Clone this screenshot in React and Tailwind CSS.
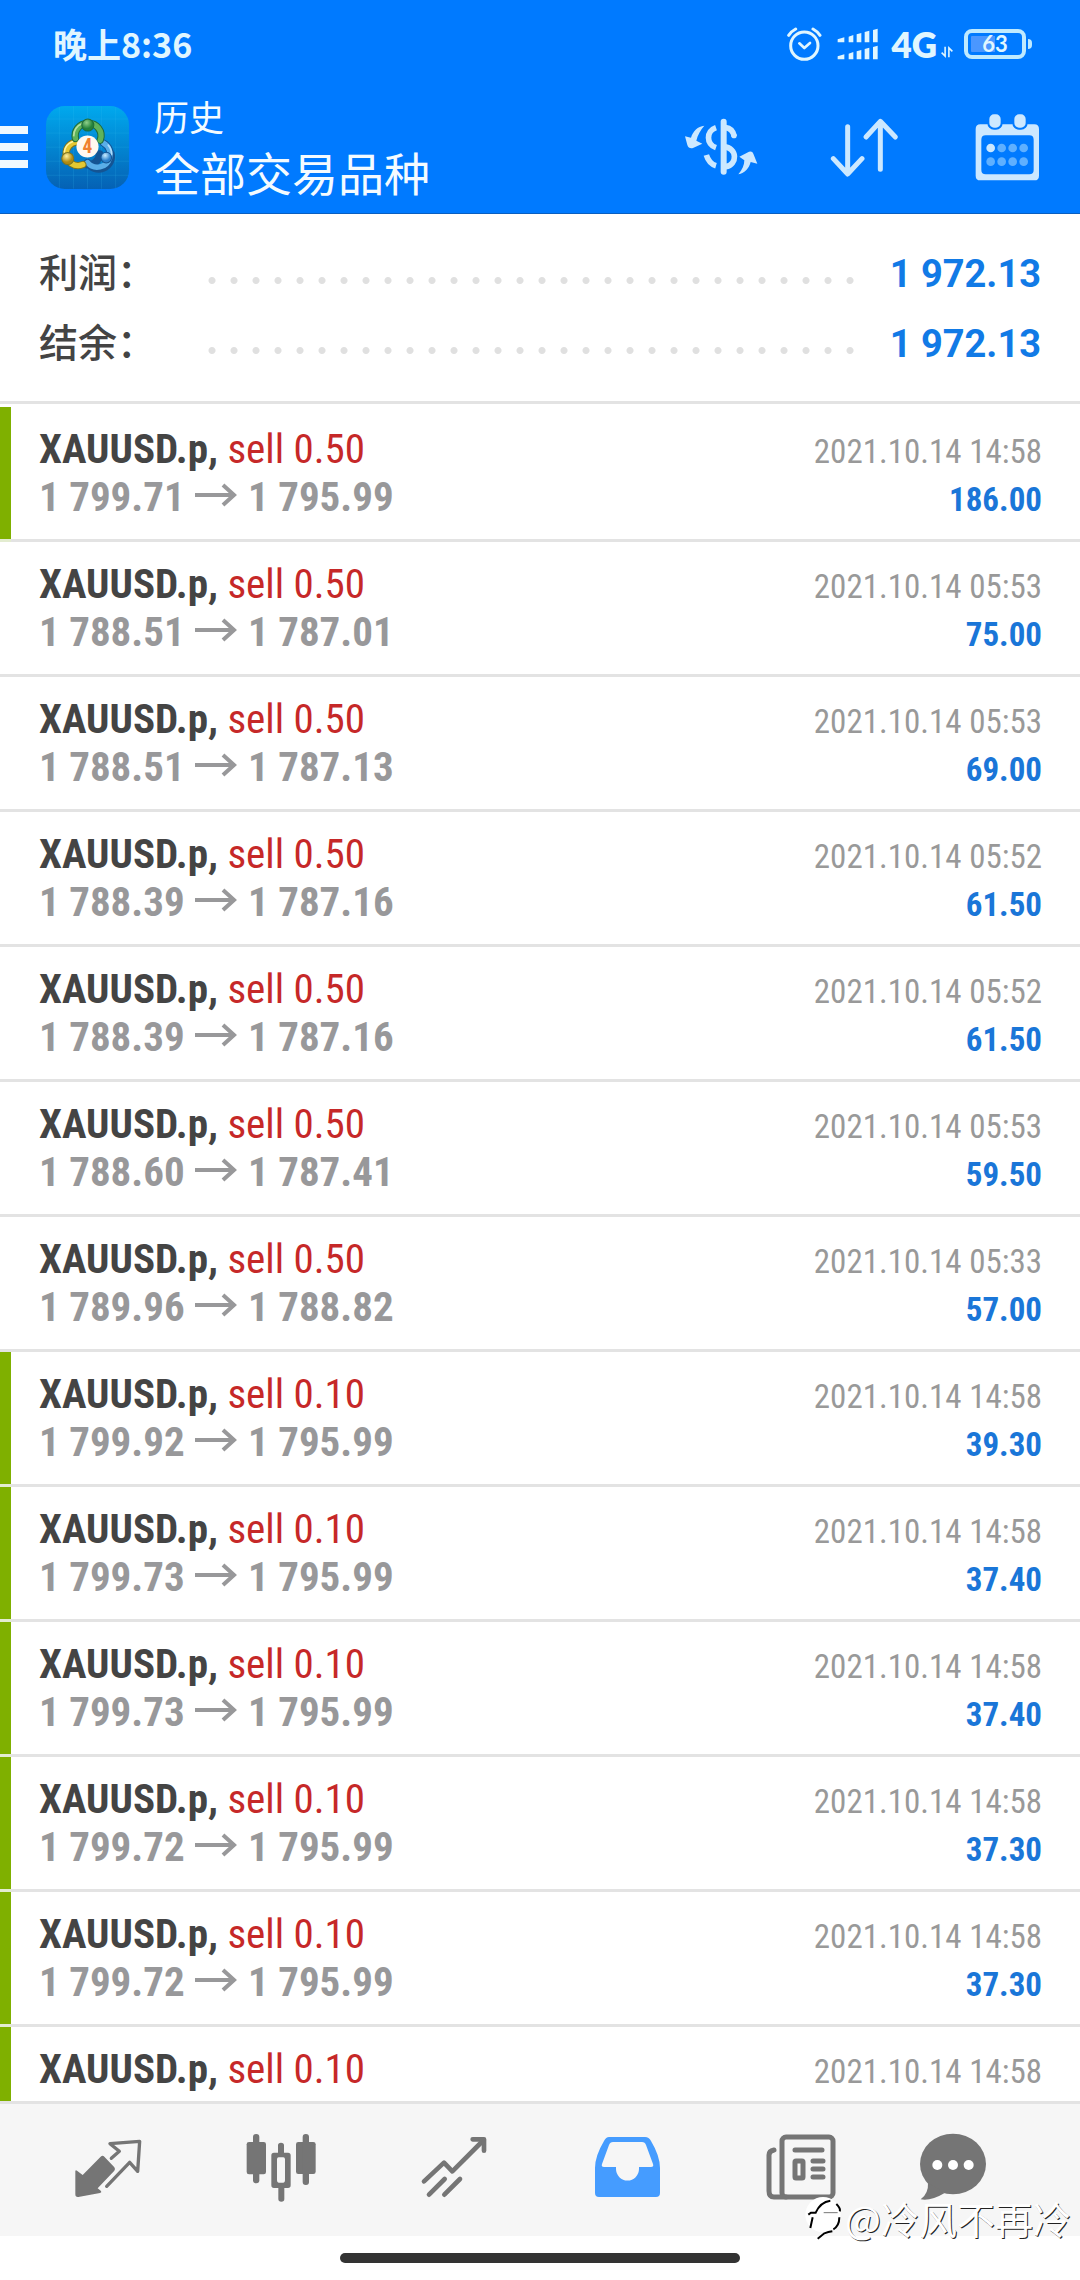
import React from 'react';

const deals = [
  { volume: '0.50', open: '1 799.71', close: '1 795.99', time: '2021.10.14 14:58', profit: '186.00', marked: true },
  { volume: '0.50', open: '1 788.51', close: '1 787.01', time: '2021.10.14 05:53', profit: '75.00' },
  { volume: '0.50', open: '1 788.51', close: '1 787.13', time: '2021.10.14 05:53', profit: '69.00' },
  { volume: '0.50', open: '1 788.39', close: '1 787.16', time: '2021.10.14 05:52', profit: '61.50' },
  { volume: '0.50', open: '1 788.39', close: '1 787.16', time: '2021.10.14 05:52', profit: '61.50' },
  { volume: '0.50', open: '1 788.60', close: '1 787.41', time: '2021.10.14 05:53', profit: '59.50' },
  { volume: '0.50', open: '1 789.96', close: '1 788.82', time: '2021.10.14 05:33', profit: '57.00' },
  { volume: '0.10', open: '1 799.92', close: '1 795.99', time: '2021.10.14 14:58', profit: '39.30', marked: true },
  { volume: '0.10', open: '1 799.73', close: '1 795.99', time: '2021.10.14 14:58', profit: '37.40', marked: true },
  { volume: '0.10', open: '1 799.73', close: '1 795.99', time: '2021.10.14 14:58', profit: '37.40', marked: true },
  { volume: '0.10', open: '1 799.72', close: '1 795.99', time: '2021.10.14 14:58', profit: '37.30', marked: true },
  { volume: '0.10', open: '1 799.72', close: '1 795.99', time: '2021.10.14 14:58', profit: '37.30', marked: true },
  { volume: '0.10', open: '1 799.70', close: '1 795.99', time: '2021.10.14 14:58', profit: '37.10', marked: true },
];

const StatusBar = () => (
  <div className="flex h-[88px] items-center justify-between pl-[53px] pr-12 text-[#e0f6ff]">
    <span className="text-[34px] font-bold leading-none">晚上8:36</span>
    <div className="flex items-center">
      <svg className="h-9 w-9" viewBox="350 18 108 108" fill="none" stroke="currentColor" strokeLinecap="round" strokeLinejoin="round">
        <circle cx="405" cy="77" r="41" strokeWidth="9" />
        <path d="M390 70l15 14 17-15" strokeWidth="8" />
        <path d="M358 46q8-12 21-19M431 27q13 7 21 19" strokeWidth="9" />
      </svg>
      <svg className="ml-[15px] h-8 w-[42px]" viewBox="502 26 126 96" fill="currentColor">
        {[0, 51].map((dy) => (
          <g key={dy} transform={`translate(0 ${dy})`}>
            <path d="M504 60l20-6v15h-20zM537 52l14-5v22h-14zM561 45l14-4v28h-14zM585 38l14-4v35h-14zM610 32l14-4v41h-14z" />
          </g>
        ))}
      </svg>
      <span className="ml-3 font-['Lato',sans-serif] text-[35px] font-extrabold leading-none">4G</span>
      <svg className="ml-1 mt-4 h-3 w-3" viewBox="811 75 38 36" fill="none" stroke="currentColor" strokeWidth="5">
        <path d="M824 76v30l-11-11M836 110V80l11 11" />
      </svg>
      <div className="ml-[11px] flex h-[30px] w-[62px] items-center justify-center rounded-lg border-4 border-[#bfeaff] bg-linear-to-r from-[#4a97ff] from-50% to-transparent to-50% bg-clip-content p-[3px] font-['Lato',sans-serif] text-[22px] font-bold leading-none">
        63
      </div>
      <div className="ml-[2px] h-[10px] w-1 rounded-r bg-[#bfeaff]" />
    </div>
  </div>
);

const AppLogo = () => (
  <svg className="ml-[18px] h-[83px] w-[83px]" viewBox="50 37 248 248">
    <defs>
      <linearGradient id="tile" x1="0" y1="0" x2="0" y2="1">
        <stop offset="0" stopColor="#00a9ee" />
        <stop offset="1" stopColor="#0561b4" />
      </linearGradient>
      <radialGradient id="green" cx=".4" cy=".3">
        <stop offset="0" stopColor="#8fd08a" />
        <stop offset="1" stopColor="#23813a" />
      </radialGradient>
      <radialGradient id="gold" cx=".4" cy=".3">
        <stop offset="0" stopColor="#fff3a0" />
        <stop offset="1" stopColor="#b08a10" />
      </radialGradient>
      <radialGradient id="sky" cx=".4" cy=".3">
        <stop offset="0" stopColor="#c9ecff" />
        <stop offset="1" stopColor="#2a80cc" />
      </radialGradient>
    </defs>
    <rect x="50" y="37" width="248" height="248" rx="56" fill="url(#tile)" />
    <path d="M90 40v242M132 38v246M174 38v246M216 38v246M258 40v242M52 76h244M50 118h248M50 160h248M50 202h248M52 244h244" stroke="#3cc0f0" strokeOpacity=".25" strokeWidth="2" />
    <g fill="none" strokeLinecap="round">
      <path d="M210 180a34 34 0 0 1-40 32M244 178a38 38 0 0 1-70 28M222 148a38 38 0 0 1 18 44" stroke="#145493" strokeWidth="22" />
      <path d="M222 148a38 38 0 0 1 18 44a38 38 0 0 1-66 14" stroke="#5aaee8" strokeWidth="16" />
      <path d="M140 144a36 36 0 0 0-30 34a36 36 0 0 0 50 34" stroke="#7d7420" strokeWidth="22" />
      <path d="M140 144a36 36 0 0 0-30 34a36 36 0 0 0 50 34" stroke="#e5c832" strokeWidth="16" />
      <path d="M138 134a37 37 0 0 1 36-45a37 37 0 0 1 38 50" stroke="#1f6b3c" strokeWidth="22" />
      <path d="M138 134a37 37 0 0 1 36-45a37 37 0 0 1 38 50" stroke="#5fb35a" strokeWidth="16" />
      <path d="M133 126a37 37 0 0 1 24-36" stroke="#b5e0a0" strokeWidth="5" />
      <path d="M105 174a36 36 0 0 1 24-30" stroke="#fff2a0" strokeWidth="5" />
      <path d="M236 154q14 16 8 36" stroke="#b0dcfa" strokeWidth="5" />
    </g>
    <circle cx="175" cy="94" r="18" fill="url(#green)" stroke="#1f6b3c" strokeWidth="3" />
    <circle cx="115" cy="194" r="18" fill="url(#gold)" stroke="#7d7420" strokeWidth="3" />
    <circle cx="230" cy="191" r="16" fill="url(#sky)" stroke="#145493" strokeWidth="3" />
    <circle cx="174" cy="158" r="33" fill="#fff8f0" />
    <text x="174" y="178" textAnchor="middle" fontSize="58" fontWeight="700" fontFamily="Roboto Condensed, sans-serif" fill="#f08030">4</text>
  </svg>
);

const AppBar = () => (
  <div className="flex h-[118px] items-center pr-10 text-[#cce8ff]">
    <button aria-label="菜单" className="flex w-7 flex-col gap-[9px]">
      <span className="h-2 bg-[#f0f9ff]" />
      <span className="h-2 bg-[#f0f9ff]" />
      <span className="h-2 bg-[#f0f9ff]" />
    </button>
    <AppLogo />
    <div className="ml-[25px] flex-1 whitespace-nowrap text-[#f4fbff]">
      <p className="text-[35px] leading-[48px]">历史</p>
      <h1 className="text-[46px] leading-[62px]">全部交易品种</h1>
    </div>
    <div className="flex items-center gap-[70px]">
      <button aria-label="交易品种">
        <svg className="h-[60px] w-[76px]" viewBox="42 290 228 180" fill="none" stroke="currentColor" strokeWidth="17">
          <path d="M164 304v150" strokeWidth="18" strokeLinecap="round" />
          <path d="M141 322c-30 10-30 50 0 60M112 404q8 26 29 32" />
          <path d="M170 322q20 2 26 26" />
          <circle cx="195" cy="346" r="8" fill="currentColor" stroke="none" />
          <path d="M164 379c42 4 42 54 6 60" />
          <path stroke="none" fill="currentColor" d="M106 316C86 318 72 332 66 352L48 348 55 374Q59 386 72 383L100 370 82 361C86 344 95 328 106 316Z" />
          <path stroke="none" fill="currentColor" d="M208 462C220 448 226 434 226 420L211 409 240 394Q250 391 253 400L265 430 245 425C240 444 228 458 208 462Z" />
        </svg>
      </button>
      <button aria-label="排序">
        <svg className="h-[60px] w-[76px]" viewBox="480 290 228 180" fill="none" stroke="currentColor" strokeWidth="15" strokeLinecap="round" strokeLinejoin="round">
          <path d="M536 319v140M493 415l43 46 43-46" />
          <path d="M634 447V304M591 350l43-47 45 47" />
        </svg>
      </button>
      <button aria-label="日期">
        <svg className="h-[68px] w-[65px]" viewBox="918 278 195 204" fill="currentColor">
          <path fillRule="evenodd" d="M934 312h162q14 0 14 14v140q0 14-14 14H934q-14 0-14-14V326q0-14 14-14zM950 345q-13 0-13 13v91q0 13 13 13h131q13 0 13-13v-91q0-13-13-13z" />
          <g stroke="#007aff" strokeWidth="6">
            <rect x="958" y="279" width="40" height="46" rx="17" />
            <rect x="1033" y="279" width="40" height="46" rx="17" />
          </g>
          <g fill="#5fb0ff">
            <circle cx="965" cy="383" r="13" fill="#cce8ff" />
            <circle cx="998" cy="383" r="13" />
            <circle cx="1031" cy="383" r="13" />
            <circle cx="1064" cy="383" r="13" />
            <circle cx="965" cy="424" r="13" />
            <circle cx="998" cy="424" r="13" />
            <circle cx="1031" cy="424" r="13" />
            <circle cx="1064" cy="424" r="13" />
          </g>
        </svg>
      </button>
    </div>
  </div>
);

const SummaryRow = ({ label, value }) => (
  <div className="flex h-[70px] items-center">
    <dt className="w-[162px] whitespace-nowrap pb-1 text-[39px] font-medium text-[#444]">{label}</dt>
    <div className="mt-[17px] h-[7px] flex-1 bg-[radial-gradient(circle,#e0e0e0_3px,transparent_4px)] bg-[length:22px_7px]" />
    <dd className="w-[178px] pt-1 text-right font-['Roboto',sans-serif] text-[38px] font-bold text-[#117ae6]">{value}</dd>
  </div>
);

const DealRow = ({ deal }) => (
  <li className="flex font-['Roboto_Condensed',sans-serif]">
    <div className={deal.marked ? 'w-[11px] border-b-[3px] border-[#e3ecd0] bg-[#7fb000] bg-clip-padding' : 'w-[11px] border-b-[3px] border-[#e3e3e3]'} />
    <div className="flex-1 border-b-[3px] border-[#e3e3e3] pb-[18px] pl-7 pr-[38px] pt-[18px]">
      <div className="flex h-12 items-baseline justify-between">
        <p className="text-[41px] leading-[48px] text-[#c62828]">
          <span className="font-bold text-[#444]">XAUUSD.p,</span> sell {deal.volume}
        </p>
        <time className="text-[33px] leading-[48px] text-[#999]">{deal.time}</time>
      </div>
      <div className="flex h-12 items-baseline justify-between">
        <p className="flex text-[41px] font-bold leading-[48px] text-[#98989a]">
          <span className="w-[156px]">{deal.open}</span>
          <svg className="mr-[10px] mt-[10px] h-6 w-[43px]" viewBox="0 0 43 24" fill="none" stroke="currentColor" strokeWidth="4">
            <path d="M0 12h39M28 2l11 10-11 10" />
          </svg>
          <span>{deal.close}</span>
        </p>
        <span className="text-[33px] font-bold leading-[48px] text-[#1a76d8]">{deal.profit}</span>
      </div>
    </div>
  </li>
);

const TabBar = () => (
  <nav className="relative flex h-[135px] shrink-0 items-center border-t-[3px] border-[#e3e3e3] bg-[#f6f6f6] px-5 pb-1 text-[#757575]">
    <button aria-label="行情" className="flex flex-1 justify-center">
      <svg className="h-[72px] w-[72px]" viewBox="93 36 216 216" fill="none" stroke="currentColor" strokeWidth="10" strokeLinecap="round" strokeLinejoin="round">
        <path fill="currentColor" stroke="none" d="M106 153q1-4 5-1l17 13 54-55q6-5 11 0l30 32q4 5 0 10l-50 53 10 8q3 5-3 6l-65 12q-9 1-9-8z" />
        <path d="M214 115l24-21-28-23 89-7-6 90-24-27-69 72" />
      </svg>
    </button>
    <button aria-label="图表" className="flex flex-1 justify-center">
      <svg className="h-[72px] w-[72px]" viewBox="612 36 216 216" fill="currentColor">
        <rect x="620" y="66" width="58" height="97" rx="7" />
        <rect x="639" y="42" width="19" height="148" rx="9" />
        <rect x="768" y="66" width="59" height="96" rx="7" />
        <rect x="788" y="42" width="19" height="153" rx="9" />
        <path d="M714 98V76q0-8 9-8t9 8v22h12q8 0 8 8v90q0 8-8 8h-11v33q0 8-9 8t-9-8v-33h-13q-8 0-8-8v-90q0-8 8-8zM716 112q-5 0-5 6v63q0 7 5 7h14q5 0 5-7v-63q0-6-5-6z" fillRule="evenodd" />
      </svg>
    </button>
    <button aria-label="交易" className="flex flex-1 justify-center">
      <svg className="h-[72px] w-[72px]" viewBox="1131 36 216 216" fill="none" stroke="currentColor" strokeWidth="14" strokeLinecap="round" strokeLinejoin="round">
        <path d="M1152 184l60-56 25 26 94-94" />
        <path d="M1298 58h34v34" />
        <path d="M1167 224l47-47M1213 224l47-47" />
      </svg>
    </button>
    <button aria-label="历史" className="flex flex-1 justify-center text-[#459cff]">
      <svg className="h-[72px] w-[72px]" viewBox="0 0 72 72" fill="currentColor">
        <path fillRule="evenodd" d="M18 5h36q4 0 6 4 9 15 9 27v25q0 4-4 4H8q-4 0-4-4V36Q4 24 13 9q2-4 5-4zM22 10q-3 0-4 3l-7 19q-1 3 2 3h12v2a11 11 0 0 0 23 0v-2h12q3 0 2-3l-7-19q-1-3-4-3z" />
      </svg>
    </button>
    <button aria-label="新闻" className="flex flex-1 justify-center">
      <svg className="h-[72px] w-[72px]" viewBox="0 0 72 72" fill="none" stroke="currentColor" strokeWidth="5" strokeLinecap="round">
        <rect x="18" y="5" width="51" height="60" rx="4" />
        <path d="M10 18q-5 1-5 5v36q0 6 5 6h12" />
        <path d="M31 18h27M49 29h10M49 37h10M49 45h10" />
        <rect x="31" y="29" width="8" height="17" rx="1" />
      </svg>
    </button>
    <button aria-label="消息" className="flex flex-1 justify-center">
      <svg className="h-[72px] w-28" viewBox="351 36 336 216" fill="currentColor">
        <ellipse cx="459" cy="132" rx="99" ry="91" />
        <path d="M384 188q2 32-22 50 30 6 72-19z" />
        <g fill="#fff">
          <circle cx="412" cy="135" r="15" />
          <circle cx="459" cy="135" r="15" />
          <circle cx="506" cy="135" r="15" />
        </g>
      </svg>
    </button>
    <div className="absolute -bottom-1 right-[9px] flex items-center gap-1 whitespace-nowrap text-[38px] leading-[44px] text-white [text-shadow:1px_1px_0_#222]">
      <svg className="h-11 w-9" viewBox="18 30 108 132" fill="none">
        <circle cx="72" cy="86" r="53" fill="#fff" />
        <path d="M28 86l8-6h14q14-32 44-36M41 94l-7 32M112 54q14 14 10 22M121 94q0 26-18 36M100 136q-12 2-24 6-10 8-20 16" stroke="#000" strokeWidth="6" />
        <path d="M74 80h42" stroke="#777" strokeWidth="3" />
      </svg>
      <span>@冷风不再冷</span>
    </div>
  </nav>
);

export default function App() {
  return (
    <div className="flex h-screen flex-col overflow-hidden bg-white font-['Noto_Sans_CJK_SC',sans-serif]">
      <header className="shrink-0 border-b border-[#0a5fc0] bg-[#007aff] pb-[7px]">
        <StatusBar />
        <AppBar />
      </header>
      <dl className="shrink-0 border-b-[3px] border-[#e3e3e3] px-[39px] pb-6 pt-[23px]">
        <SummaryRow label="利润：" value="1 972.13" />
        <SummaryRow label="结余：" value="1 972.13" />
      </dl>
      <ul className="min-h-0 flex-1 overflow-hidden pt-[3px]">
        {deals.map((deal, i) => (
          <DealRow key={i} deal={deal} />
        ))}
      </ul>
      <TabBar />
      <div className="flex h-11 shrink-0 items-center justify-center">
        <div className="h-[10px] w-[37%] rounded-full bg-[#333]" />
      </div>
    </div>
  );
}
